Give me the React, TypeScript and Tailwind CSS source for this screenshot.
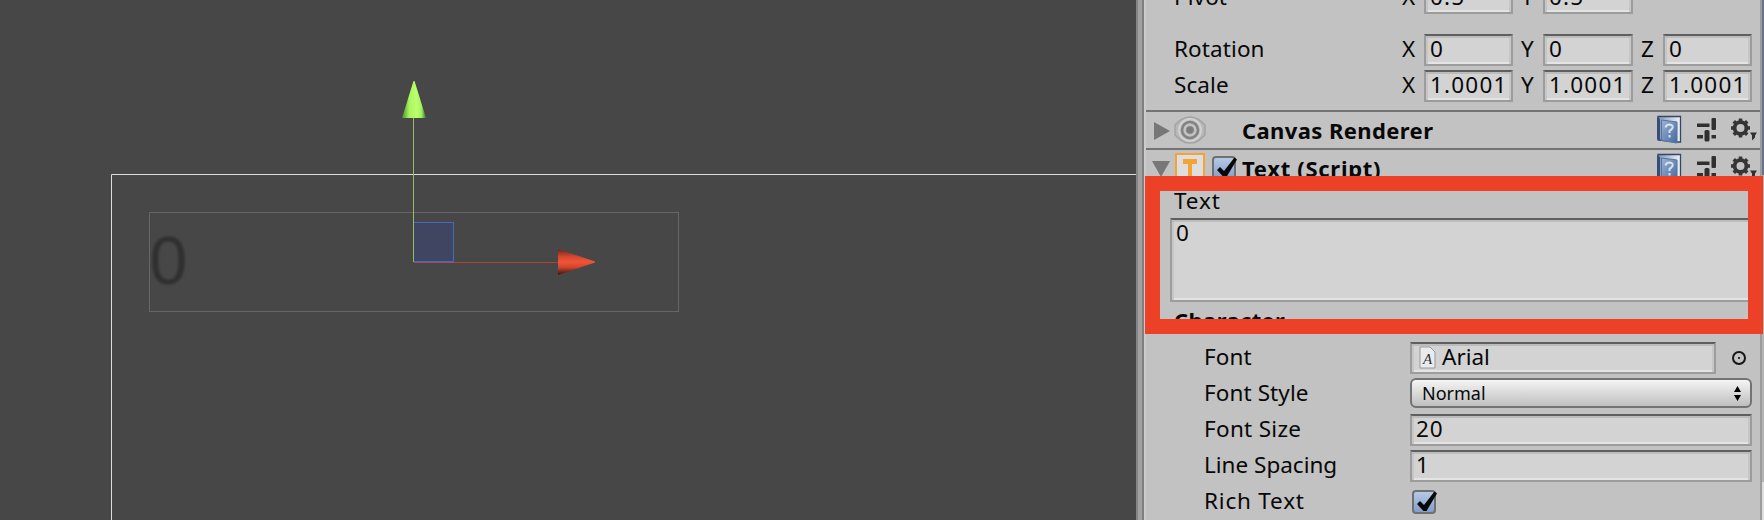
import React from "react";

function Field({ className, children }: { className: string; children?: React.ReactNode }) {
  return (
    <div
      className={`box-border flex overflow-hidden whitespace-nowrap border-2 border-[#9c9c9c] border-t-[#5f5f5f] bg-[#d3d3d3] pl-1 shadow-[inset_0_2px_0_#bcbcbc,inset_2px_0_0_#c6c6c6,inset_-2px_0_0_#c6c6c6,inset_0_-2px_0_#e4e4e4] ${className}`}
    >
      {children}
    </div>
  );
}

function Axis({ name, value, className }: { name: string; value: string; className: string }) {
  return (
    <div className={`flex items-center ${className}`}>
      <span className="w-[22px] shrink-0 pb-[2px]">{name}</span>
      <Field className="h-8 min-w-0 flex-1 items-center">
        <span className="pb-[2px] tracking-[1.2px]">{value}</span>
      </Field>
    </div>
  );
}

function VectorRow({ name, values }: { name: string; values: string[] }) {
  return (
    <div className="flex h-9 shrink-0 items-center pl-7">
      <span className="w-[228px] shrink-0 pb-[2px] tracking-[0.1px]">{name}</span>
      <Axis name="X" value={values[0]} className="w-[111px]" />
      <Axis name="Y" value={values[1]} className="ml-2 w-[112px]" />
      {values[2] !== undefined && <Axis name="Z" value={values[2]} className="ml-2 w-[111px]" />}
    </div>
  );
}

function Check() {
  return (
    <svg width="26" height="24" viewBox="0 0 26 24" className="block shrink-0">
      <defs>
        <linearGradient id="check" x1="0" y1="0" x2="0" y2="1">
          <stop offset="0" stopColor="#b9cce4" />
          <stop offset="1" stopColor="#7f9cca" />
        </linearGradient>
      </defs>
      <rect x="1" y="1" width="22" height="22" rx="3" fill="url(#check)" stroke="#6f7072" strokeWidth="2" />
      <path d="M5 14l3-3 4 4L22.500 1.500l2.500 2L14.500 21h-3z" fill="#080808" />
    </svg>
  );
}

function ToolIcons() {
  return (
    <svg width="102" height="30" viewBox="0 0 102 30" className="mr-[2px] block shrink-0">
      <defs>
        <linearGradient id="book" x1="0" y1="0" x2="1" y2="1">
          <stop offset="0" stopColor="#9cb3d5" />
          <stop offset="1" stopColor="#44699f" />
        </linearGradient>
        <linearGradient id="pages">
          <stop offset="0" stopColor="#7f97b9" />
          <stop offset="1" stopColor="#f1f3f5" />
        </linearGradient>
      </defs>
      <path d="M2 1.500h22.500V27H21L2 25z" fill="url(#pages)" stroke="#334669" strokeWidth="1.300" />
      <path d="M1 2l3 2v22l-3-2z" fill="#354e75" />
      <path d="M5.500 5l15.500 2v21L5.500 25.500z" fill="url(#book)" stroke="#55749f" />
      <path d="M9.500 12.500q.5-3 4-3 4 .5 3 3.500-1 1.500-3 3v2m0 2v2.500" fill="none" stroke="#d9e2ee" strokeWidth="2" />
      <g fill="#303030">
        <rect x="41" y="8.500" width="12.500" height="3.500" />
        <rect x="55.500" y="3" width="4.500" height="12" rx="1" />
        <rect x="41" y="20" width="6" height="3.500" />
        <rect x="48.500" y="15" width="5" height="11.500" rx="1.500" />
        <rect x="55.500" y="20" width="4.500" height="3.500" />
        <path d="M94 17.500h7l-2 3v2l-3 3v-5z" />
      </g>
      <g stroke="#353535" fill="none">
        <circle cx="84.500" cy="13" r="5.900" strokeWidth="3.800" />
        <path
          d="M84.500 3.500v3M84.500 19.500v3M75 13h3M91 13h3M77.800 6.300l2.100 2.100M89.100 17.600l2.100 2.100M77.800 19.700l2.100-2.100M89.100 8.400l2.100-2.100"
          strokeWidth="3.600"
        />
      </g>
    </svg>
  );
}

function RendererIcon() {
  return (
    <svg width="32" height="28" viewBox="0 0 32 28" fill="none" className="block">
      <path d="M16 1C9 1 5 5 1 9v10c4 4 8 8 15 8s11-4 15-8V9C27 5 23 1 16 1z" fill="#b7b7b7" stroke="#a4a4a4" strokeWidth="1.500" />
      <circle cx="16" cy="14" r="11" stroke="#d0d0d0" strokeWidth="2" />
      <circle cx="16" cy="14" r="8" stroke="#828282" strokeWidth="2.500" />
      <circle cx="16" cy="14" r="5.500" stroke="#c5c5c5" strokeWidth="1.500" />
      <circle cx="16" cy="14" r="3.800" fill="#7c7c7c" />
    </svg>
  );
}

function Scene() {
  return (
    <svg width="1136" height="520" viewBox="0 0 1136 520" className="block shrink-0 bg-[#474747]">
      <defs>
        <linearGradient id="up">
          <stop offset="0" stopColor="#4d8a35" />
          <stop offset=".3" stopColor="#a8f55f" />
          <stop offset=".6" stopColor="#bdff6e" />
          <stop offset=".8" stopColor="#a4f45c" />
          <stop offset="1" stopColor="#447031" />
        </linearGradient>
        <linearGradient id="right" x1="0" y1="0" x2="0" y2="1">
          <stop offset="0" stopColor="#64251c" />
          <stop offset=".3" stopColor="#d4492f" />
          <stop offset=".5" stopColor="#f25437" />
          <stop offset=".7" stopColor="#cf472e" />
          <stop offset="1" stopColor="#35120d" />
        </linearGradient>
      </defs>
      <path d="M111.500 520V174.500H1136" fill="none" stroke="#dedede" />
      <rect x="149.500" y="212.500" width="529" height="99" fill="none" stroke="#666" />
      <text x="149.500" y="284" fontSize="68" fill="#303030" fontFamily="Liberation Sans, sans-serif" className="blur-[1px]">
        0
      </text>
      <rect x="413.500" y="222.500" width="40" height="39" fill="#404661" stroke="#416ac0" />
      <path d="M413.500 118v144" stroke="#91bc68" />
      <path d="M414 262.500h144" stroke="#ac4333" />
      <path d="M414 262.500h40" stroke="#a94b59" />
      <path d="M413.500 81h1L426 118h-24z" fill="url(#up)" />
      <path d="M558 249l37 12.500v1L558 275z" fill="url(#right)" />
    </svg>
  );
}

function Property({ name, spacing = "tracking-[0.1px]", children }: { name: string; spacing?: string; children: React.ReactNode }) {
  return (
    <div className="flex h-9 items-center pl-[58px]">
      <span className={`w-[206px] shrink-0 pb-[2px] ${spacing}`}>{name}</span>
      {children}
    </div>
  );
}

export default function App() {
  return (
    <main className="relative flex h-[520px] w-[1764px] overflow-hidden bg-[#c2c2c2] font-['Noto_Sans',sans-serif] text-[22.500px] leading-8 text-[#080808]">
      <Scene />
      <div className="h-full w-2 shrink-0 border-x-2 border-l-[#858585] border-r-[#7e7e7e] bg-[#a1a1a1]" />
      <section className="flex h-full w-[616px] shrink-0 flex-col overflow-hidden border-l-2 border-[#cbcbcb]">
        <div className="-mt-[20px] h-[52px] shrink-0">
          <VectorRow name="Pivot" values={["0.5", "0.5"]} />
        </div>
        <VectorRow name="Rotation" values={["0", "0", "0"]} />
        <VectorRow name="Scale" values={["1.0001", "1.0001", "1.0001"]} />
        <div className="mt-[6px] flex h-[38px] shrink-0 items-center border-t-2 border-[#737373]">
          <svg width="28" height="24" className="shrink-0">
            <path d="M8 4l16 9-16 9z" fill="#777" />
          </svg>
          <RendererIcon />
          <b className="ml-[36px] flex-1 text-[22px] tracking-[0.400px]">Canvas Renderer</b>
          <ToolIcons />
        </div>
        <div className="flex h-[38px] shrink-0 items-center border-t-2 border-[#737373]">
          <svg width="28" height="24" className="shrink-0">
            <path d="M6 5h18l-9 16z" fill="#777" />
          </svg>
          <svg width="32" height="32" className="shrink-0">
            <rect x="2" y="2" width="28" height="30" fill="#dedede" stroke="#f5a334" strokeWidth="2" />
            <path d="M9 7h14v5h-5v16h-4V12H9z" fill="#f5a334" />
          </svg>
          <span className="ml-[6px]"><Check /></span>
          <b className="ml-1 flex-1 text-[22px] tracking-[0.700px]">Text (Script)</b>
          <ToolIcons />
        </div>
        <div className="h-8 shrink-0 pl-7 leading-[30px] tracking-[0.9px]">Text</div>
        <Field className="ml-6 h-[84px] w-[590px] shrink-0 items-start leading-[26px]">0</Field>
        <b className="h-[38px] shrink-0 pl-7 pt-[2px] text-[22px] tracking-[0.350px]">Character</b>
        <div className="shrink-0">
          <Property name="Font">
            <Field className="h-8 w-[306px] items-center">
              <svg width="23" height="24" className="ml-[3px] shrink-0">
                <path d="M1 1h10l5 5v16H1z" fill="#e9ecef" stroke="#999" />
                <text x="4" y="18" fontSize="15" fontStyle="italic" fontFamily="Liberation Serif, serif" fill="#333">A</text>
              </svg>
              <span className="pb-[2px]">Arial</span>
            </Field>
            <svg width="16" height="16" className="ml-[15px]">
              <circle cx="8" cy="8" r="6" fill="none" stroke="#151515" strokeWidth="2" />
              <circle cx="8" cy="8" r="1" />
            </svg>
          </Property>
          <Property name="Font Style">
            <div className="mb-[2px] flex h-[30px] w-[342px] items-center justify-between rounded-md border-2 border-[#737373] bg-linear-to-b from-[#f5f5f5] to-[#bfbfbf] pl-[10px] pr-[9px] text-[18px]">
              <span className="pb-px">Normal</span>
              <svg width="7" height="15"><path d="M0 6l3.500-6L7 6zM0 9h7l-3.500 6z" /></svg>
            </div>
          </Property>
          <Property name="Font Size" spacing="tracking-[0.3px]">
            <Field className="h-8 w-[342px] items-center"><span className="pb-[2px] tracking-[1px]">20</span></Field>
          </Property>
          <Property name="Line Spacing" spacing="tracking-normal">
            <Field className="h-8 w-[342px] items-center"><span className="pb-[2px]">1</span></Field>
          </Property>
          <Property name="Rich Text" spacing="tracking-[0.8px]"><span className="ml-[2px]"><Check /></span></Property>
        </div>
      </section>
      <aside className="flex h-full w-1 shrink-0 flex-col border-l-2 border-[#9c9c9c]">
        <div className="h-[175px] bg-[#667392]" />
        <div className="h-[307px] bg-[#b4b4b4]" />
        <div className="flex-1 bg-[#dedede]" />
      </aside>
      <div className="absolute left-[1145px] top-[175.500px] h-[158px] w-[618px] border-[15px] border-[#ed4127]" />
    </main>
  );
}
